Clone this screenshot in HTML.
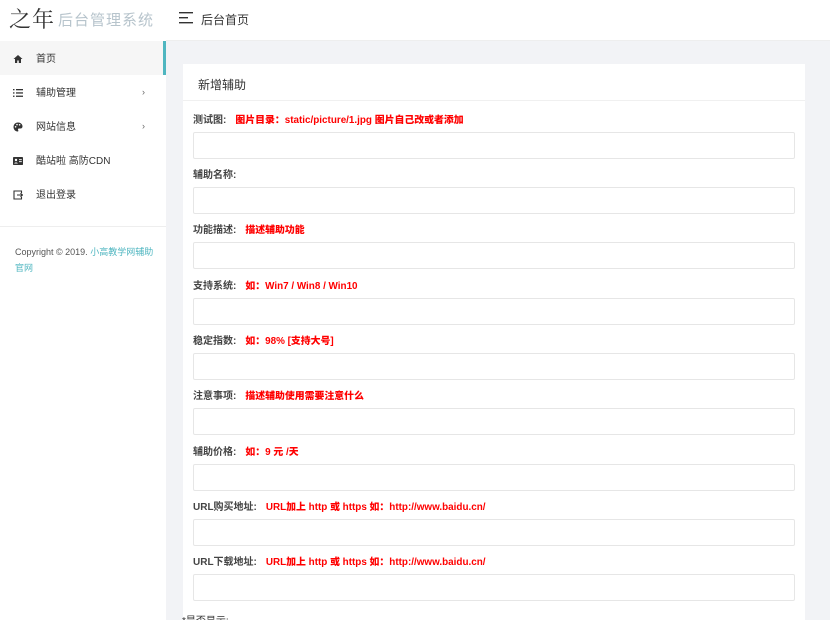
<!DOCTYPE html>
<html><head><meta charset="utf-8"><style>
*{margin:0;padding:0;box-sizing:border-box}
html,body{width:830px;height:620px;overflow:hidden}
body{background:#f2f3f6;font-family:"Liberation Sans","Noto Sans CJK SC",sans-serif;position:relative}
.side{position:absolute;left:0;top:0;width:166px;height:620px;background:#fff}
.logo{height:41px;position:relative}
.logo .a{position:absolute;left:9px;top:3px;font-size:22px;color:#333;font-family:"Noto Serif CJK SC",serif;letter-spacing:1px}
.logo .b{position:absolute;left:58px;top:9px;font-size:15px;color:#b7c4cc;letter-spacing:1px}
.top{position:absolute;left:166px;top:0;right:0;height:41px;background:#fff;border-bottom:1px solid #eee}
.top .t{position:absolute;left:35px;top:11px;font-size:12px;color:#333}
.nav{position:absolute;top:41px;left:0;width:166px}
.it{height:34px;position:relative;font-size:10px;color:#333;line-height:38px;padding-left:36px}
.it.on{background:#f6f6f6;border-right:3px solid #4fb6c0}
.it .i{position:absolute;left:13px;top:13px;width:10px;height:10px}
.it .ar{position:absolute;left:142px;top:-2px;font-size:9px;color:#666}
.sep{position:absolute;top:226px;left:0;width:166px;border-top:1px solid #eee}
.copy{position:absolute;top:244px;left:15px;width:140px;font-size:9px;line-height:16px;color:#555}
.copy span{color:#4fb6c0}
.card{position:absolute;left:183px;top:64px;width:622px;height:560px;background:#fff}
.ch{height:37px;border-bottom:1px solid #f0f0f0;font-size:12px;color:#333;padding:12px 0 0 15px}
.f{position:absolute;left:10px;width:602px}
.f .l{font-size:10px;font-weight:bold;color:#444;height:11px;line-height:11px}
.f .l b{color:#f00;margin-left:9px;font-size:9.9px}
.f .in{margin-top:6px;height:27px;border:1px solid #e6e6e6;border-radius:2px}
.last{position:absolute;left:182px;top:612px;font-size:10px;color:#333}
</style></head><body>
<div class="side">
<div class="logo"><span class="a">之年</span><span class="b">后台管理系统</span></div>
<div class="nav">
<div class="it on"><svg class="i" viewBox="0 0 10 10"><path d="M5 1L0.5 5H2v4h2.2V6.5h1.6V9H8V5h1.5z" fill="#333"/></svg>首页</div>
<div class="it"><svg class="i" viewBox="0 0 10 10" fill="#333"><rect x="0" y="1" width="1.5" height="1.3"/><rect x="3" y="1" width="7" height="1.3"/><rect x="0" y="4.3" width="1.5" height="1.3"/><rect x="3" y="4.3" width="7" height="1.3"/><rect x="0" y="7.6" width="1.5" height="1.3"/><rect x="3" y="7.6" width="7" height="1.3"/></svg>辅助管理<span class="ar">›</span></div>
<div class="it"><svg class="i" viewBox="0 0 10 10"><path d="M5 0.5C2 0.5 0.5 2.8 0.5 5c0 2.5 2 4.5 4 4.5 1 0 1-1 .6-1.6-.4-.6 0-1.4.8-1.4H7.5c1.3 0 2-1 2-2.2C9.5 2.2 7.5.5 5 .5z" fill="#333"/><circle cx="2.6" cy="4.8" r=".8" fill="#fff"/><circle cx="4" cy="2.6" r=".8" fill="#fff"/><circle cx="6.6" cy="2.8" r=".8" fill="#fff"/></svg>网站信息<span class="ar">›</span></div>
<div class="it"><svg class="i" viewBox="0 0 10 10"><rect x="0" y="1" width="10" height="8" rx=".8" fill="#333"/><circle cx="3" cy="4" r="1.2" fill="#fff"/><path d="M1.2 7.5c.3-1.3 3.3-1.3 3.6 0z" fill="#fff"/><rect x="6" y="3.2" width="2.8" height=".9" fill="#fff"/><rect x="6" y="5.2" width="2.8" height=".9" fill="#fff"/></svg>酷站啦 高防CDN</div>
<div class="it"><svg class="i" viewBox="0 0 10 10" fill="none" stroke="#333" stroke-width="1.1"><path d="M8.5 3V1H1v8h7.5V7"/><path d="M4 5h5.5M7.5 3.2L9.5 5 7.5 6.8"/></svg>退出登录</div>
</div>
<div class="sep"></div>
<div class="copy">Copyright © 2019. <span>小高教学网辅助官网</span></div>
</div>
<div class="top"><svg style="position:absolute;left:13px;top:12px" width="14" height="12" viewBox="0 0 14 12" fill="#333"><rect y="0" width="14" height="1.4"/><rect y="5" width="9" height="1.4"/><rect y="10" width="14" height="1.4"/></svg><span class="t">后台首页</span></div>
<div class="card"><div class="ch">新增辅助</div></div>
<div class="f" style="top:115px;left:193px"><div class="l">测试图:<b>图片目录：static/picture/1.jpg 图片自己改或者添加</b></div><div class="in"></div></div>
<div class="f" style="top:170px;left:193px"><div class="l">辅助名称:</div><div class="in"></div></div>
<div class="f" style="top:225px;left:193px"><div class="l">功能描述:<b>描述辅助功能</b></div><div class="in"></div></div>
<div class="f" style="top:281px;left:193px"><div class="l">支持系统:<b>如：Win7 / Win8 / Win10</b></div><div class="in"></div></div>
<div class="f" style="top:336px;left:193px"><div class="l">稳定指数:<b>如：98% [支持大号]</b></div><div class="in"></div></div>
<div class="f" style="top:391px;left:193px"><div class="l">注意事项:<b>描述辅助使用需要注意什么</b></div><div class="in"></div></div>
<div class="f" style="top:447px;left:193px"><div class="l">辅助价格:<b>如：9 元 /天</b></div><div class="in"></div></div>
<div class="f" style="top:502px;left:193px"><div class="l">URL购买地址:<b>URL加上 http 或 https 如：http://www.baidu.cn/</b></div><div class="in"></div></div>
<div class="f" style="top:557px;left:193px"><div class="l">URL下载地址:<b>URL加上 http 或 https 如：http://www.baidu.cn/</b></div><div class="in"></div></div>
<div class="last">*是否显示:</div>
</body></html>
